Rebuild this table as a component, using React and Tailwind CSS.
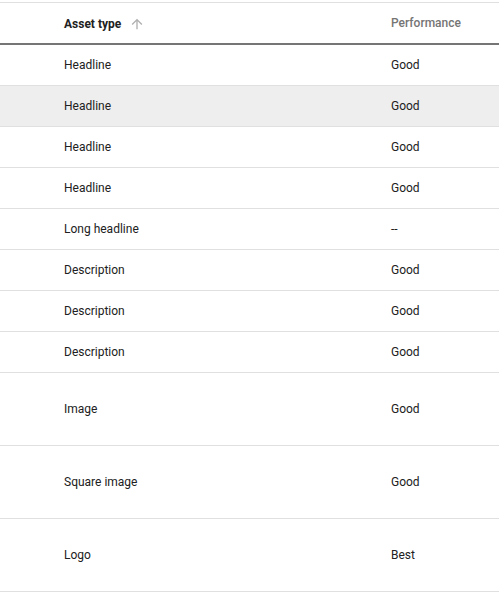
import React from "react";

const rows = [
  ["Headline", "Good", false, false],
  ["Headline", "Good", true, false],
  ["Headline", "Good", false, false],
  ["Headline", "Good", false, false],
  ["Long headline", "--", false, false],
  ["Description", "Good", false, false],
  ["Description", "Good", false, false],
  ["Description", "Good", false, false],
  ["Image", "Good", false, true],
  ["Square image", "Good", false, true],
  ["Logo", "Best", false, true],
];

export default function App() {
  return (
    <div className="w-[499px] h-[595px] bg-white pt-[2px] text-[12px] text-[#212121]" style={{ fontFamily: "Roboto, 'Liberation Sans', sans-serif" }}>
      <div className="border-t border-[#e0e0e0]">
        <div className="flex h-[42px] items-center border-b-2 border-[#757575]">
          <div className="w-[391px] pl-[64px] flex items-center gap-[8px] font-bold text-[#212121] pt-[2px]">
            <span>Asset type</span>
            <svg width="16" height="16" viewBox="0 0 24 24" className="text-[#b0b0b0]">
              <path d="M4 12l1.41 1.41L11 7.83V20h2V7.83l5.58 5.59L20 12l-8-8-8 8z" fill="currentColor" />
            </svg>
          </div>
          <div className="text-[#757575] font-medium">Performance</div>
        </div>
        {rows.map(([a, p, hi, tall], i) => (
          <div
            key={i}
            className={`flex items-center border-b border-[#e0e0e0] ${tall ? "h-[73px]" : "h-[41px]"} ${hi ? "bg-[#eeeeee]" : ""}`}
          >
            <div className="w-[391px] pl-[64px]">{a}</div>
            <div>{p}</div>
          </div>
        ))}
      </div>
    </div>
  );
}
